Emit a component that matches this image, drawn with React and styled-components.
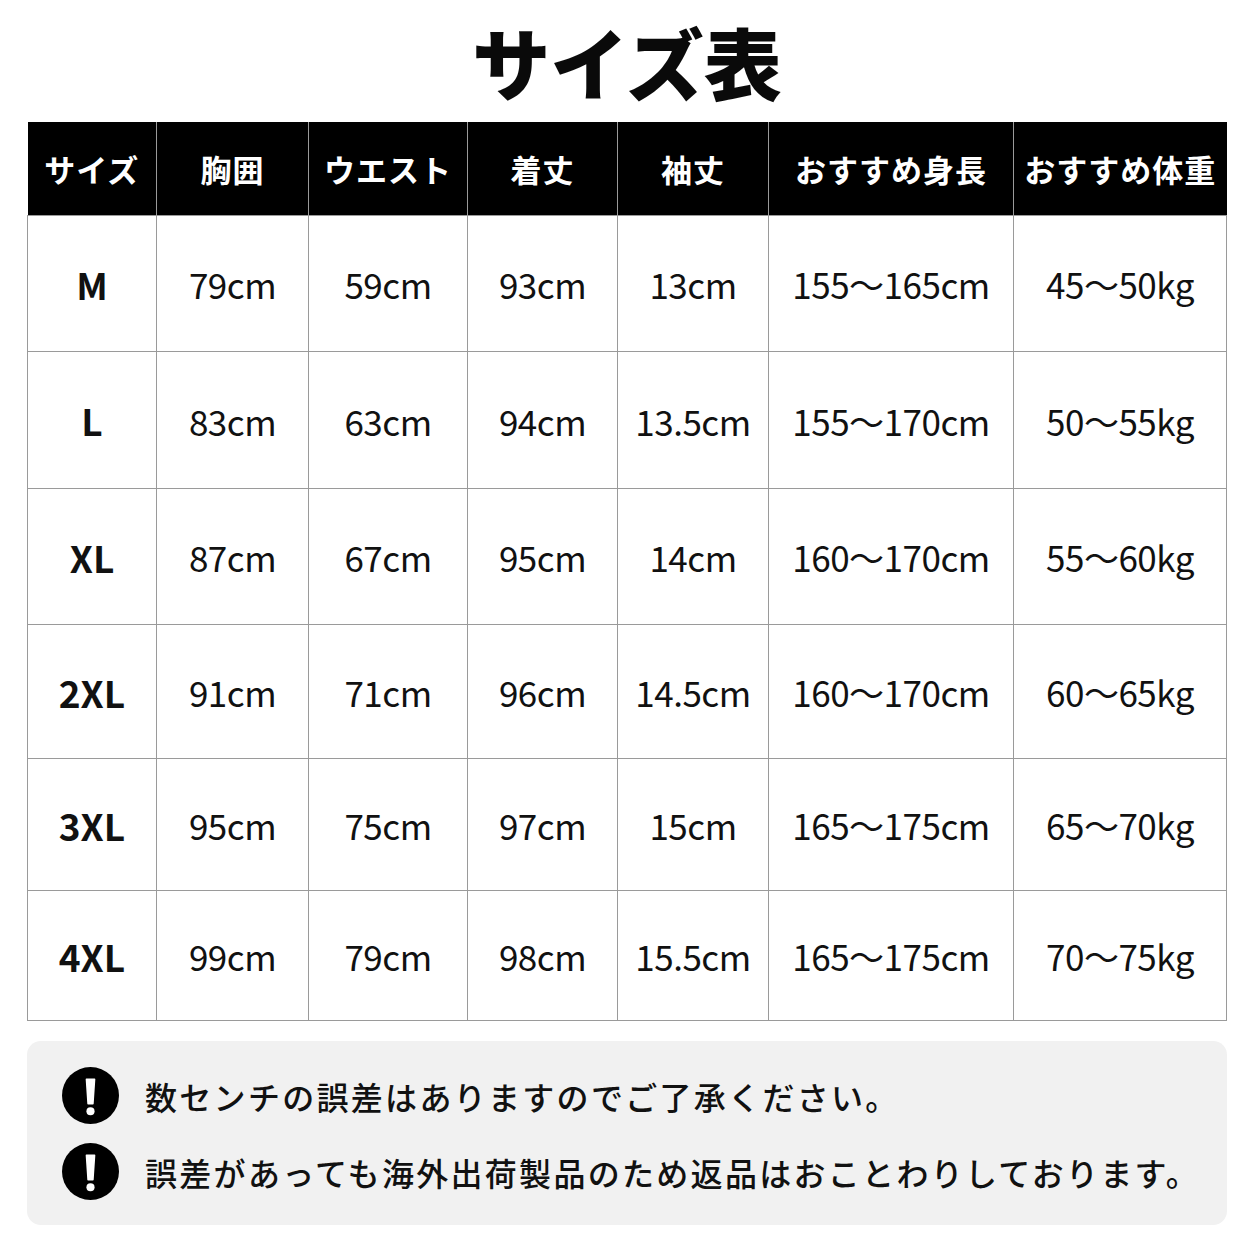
import React from 'react';
import styled, { createGlobalStyle } from 'styled-components';

const GlobalStyle = createGlobalStyle`
  html, body {
    margin: 0;
    padding: 0;
    background: #fff;
  }
  body {
    font-family: "Noto Sans CJK JP", "Noto Sans", sans-serif;
    color: #111;
  }
`;

const columns = [
  { label: 'サイズ', width: 129 },
  { label: '胸囲', width: 152 },
  { label: 'ウエスト', width: 159 },
  { label: '着丈', width: 150 },
  { label: '袖丈', width: 151 },
  { label: 'おすすめ身長', width: 245 },
  { label: 'おすすめ体重', width: 213 },
];

const rows = [
  ['M', '79cm', '59cm', '93cm', '13cm', '155〜165cm', '45〜50kg'],
  ['L', '83cm', '63cm', '94cm', '13.5cm', '155〜170cm', '50〜55kg'],
  ['XL', '87cm', '67cm', '95cm', '14cm', '160〜170cm', '55〜60kg'],
  ['2XL', '91cm', '71cm', '96cm', '14.5cm', '160〜170cm', '60〜65kg'],
  ['3XL', '95cm', '75cm', '97cm', '15cm', '165〜175cm', '65〜70kg'],
  ['4XL', '99cm', '79cm', '98cm', '15.5cm', '165〜175cm', '70〜75kg'],
];

const rowHeights = [136, 137, 136, 134, 132, 130];

const notes = [
  '数センチの誤差はありますのでご了承ください。',
  '誤差があっても海外出荷製品のため返品はおことわりしております。',
];

const Page = styled.div`
  width: 1254px;
  height: 1254px;
  box-sizing: border-box;
  padding: 16px 27px 0 27px;
  display: flex;
  flex-direction: column;
`;

const Title = styled.h1`
  margin: 0 0 16px 0;
  text-align: center;
  font-size: 78px;
  line-height: 90px;
  font-weight: 900;
  color: #0a0a0a;
`;

const Table = styled.table`
  border-collapse: collapse;
  table-layout: fixed;
  width: 1200px;
`;

const HeadCell = styled.th`
  background: #000;
  color: #fff;
  height: 93px;
  padding: 0;
  font-size: 31px;
  font-weight: 700;
  text-align: center;
  border: 1.5px solid #9a9a9a;
  border-top: none;
  letter-spacing: 1px;
  &:first-child { border-left: none; }
  &:last-child { border-right: none; }
`;

const Cell = styled.td`
  padding: 0;
  text-align: center;
  border: 1.5px solid #9a9a9a;
  font-size: ${p => (p.$size ? '37px' : '35px')};
  font-weight: ${p => (p.$size ? 700 : 400)};
  letter-spacing: ${p => (p.$size ? '0' : '-0.5px')};
  color: #111;
  white-space: nowrap;
`;

const NotePanel = styled.div`
  margin-top: 20px;
  width: 1200px;
  height: 184px;
  box-sizing: border-box;
  background: #f1f1f1;
  border-radius: 14px;
  padding: 26px 0 0 35px;
  display: flex;
  flex-direction: column;
  gap: 19px;
`;

const NoteRow = styled.div`
  display: flex;
  align-items: center;
  gap: 26px;
`;

const NoteText = styled.span`
  font-size: 32px;
  font-weight: 500;
  letter-spacing: 2.3px;
  color: #111;
`;

const AlertIcon = () => (
  <svg width="57" height="57" viewBox="0 0 56 56">
    <circle cx="28" cy="28" r="28" fill="#000" />
    <path d="M24 12 h8 l-1.6 24 h-4.8 z" fill="#fff" strokeLinejoin="round" stroke="#fff" strokeWidth="1.5" />
    <circle cx="28" cy="43.5" r="4" fill="#fff" />
  </svg>
);

export default function App() {
  return (
    <>
      <GlobalStyle />
      <Page>
        <Title>サイズ表</Title>
        <Table>
          <colgroup>
            {columns.map(c => (
              <col key={c.label} style={{ width: c.width }} />
            ))}
          </colgroup>
          <thead>
            <tr>
              {columns.map(c => (
                <HeadCell key={c.label}>{c.label}</HeadCell>
              ))}
            </tr>
          </thead>
          <tbody>
            {rows.map((r, i) => (
              <tr key={r[0]} style={{ height: rowHeights[i] }}>
                {r.map((v, j) => (
                  <Cell key={j} $size={j === 0}>{v}</Cell>
                ))}
              </tr>
            ))}
          </tbody>
        </Table>
        <NotePanel>
          {notes.map(n => (
            <NoteRow key={n}>
              <AlertIcon />
              <NoteText>{n}</NoteText>
            </NoteRow>
          ))}
        </NotePanel>
      </Page>
    </>
  );
}
